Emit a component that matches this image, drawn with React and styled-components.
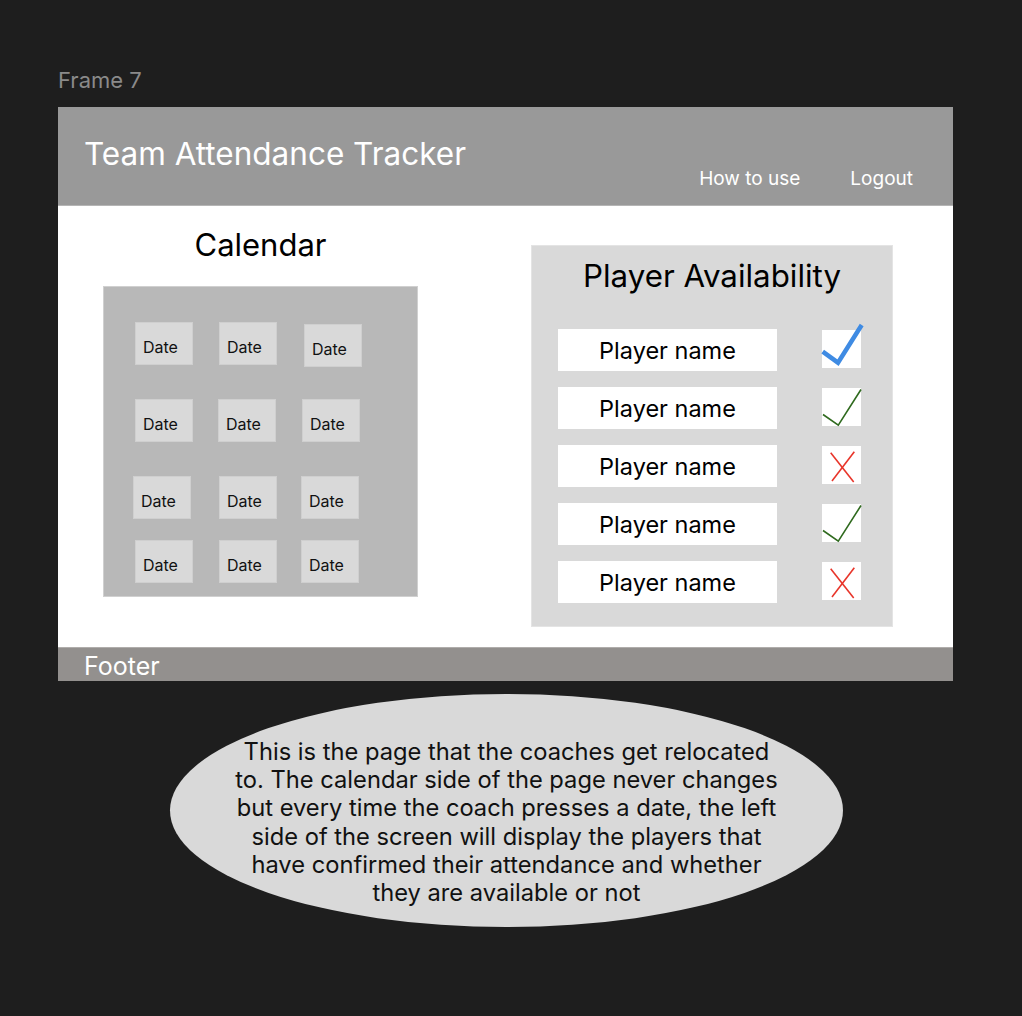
import React from "react";
import styled, { createGlobalStyle } from "styled-components";

const Global = createGlobalStyle`
  html, body { margin: 0; padding: 0; background: #1e1e1e; }
  body { font-family: Inter, "Noto Sans", "Liberation Sans", sans-serif; }
`;

const Page = styled.div`
  width: 1022px;
  height: 1016px;
  box-sizing: border-box;
  padding: 65px 0 0 58px;
  background: #1e1e1e;
`;

const FrameLabel = styled.div`
  color: #8a8a8a;
  font-size: 22px;
  line-height: 30px;
  height: 42px;
`;

const Frame = styled.div`
  width: 895px;
  display: flex;
  flex-direction: column;
  background: #ffffff;
`;

const Header = styled.header`
  height: 99px;
  background: #999999;
  display: flex;
  justify-content: space-between;
  align-items: flex-start;
  padding: 0 40px 0 26px;
  box-sizing: border-box;
  border-bottom: 1px solid #b5b5b5;
`;

const Title = styled.h1`
  margin: 28px 0 0;
  font-weight: 400;
  font-size: 31.5px;
  line-height: 38px;
  color: #ffffff;
`;

const Nav = styled.nav`
  display: flex;
  gap: 50px;
  margin-top: 59px;
`;

const NavLink = styled.span`
  color: #ffffff;
  font-size: 19px;
  line-height: 25px;
`;

const Body = styled.main`
  height: 441px;
  display: flex;
  align-items: flex-start;
  padding-left: 45px;
  gap: 113px;
`;

const CalendarCol = styled.section`
  width: 315px;
  display: flex;
  flex-direction: column;
  align-items: center;
  padding-top: 21px;
  gap: 23px;
`;

const SectionTitle = styled.h2`
  margin: 0;
  font-weight: 400;
  font-size: 31px;
  line-height: 36px;
  color: #000000;
`;

const CalendarBox = styled.div`
  width: 315px;
  height: 311px;
  box-sizing: border-box;
  background: #b8b8b8;
  border: 1px solid #d0d0d0;
  display: grid;
  grid-template-columns: 84px 83px 58px;
  grid-template-rows: 77px 77px 64px 43px;
  padding: 35px 0 0 31px;
`;

const DateCell = styled.div`
  width: 58px;
  height: 43px;
  box-sizing: border-box;
  background: #d9d9d9;
  border: 1px solid #cfcfcf;
  display: flex;
  align-items: center;
  padding: 6px 0 0 7px;
  font-size: 16px;
  color: #111111;
  margin-left: ${(p) => p.$dx || 0}px;
  margin-top: ${(p) => p.$dy || 0}px;
`;

const Panel = styled.section`
  margin-top: 39px;
  width: 362px;
  height: 382px;
  box-sizing: border-box;
  background: #d9d9d9;
  border: 1px solid #e4e4e4;
  padding: 11px 0 0 26px;
  display: flex;
  flex-direction: column;
`;

const PanelTitle = styled.h2`
  margin: 0 0 34px -26px;
  text-align: center;
  font-weight: 400;
  font-size: 31.3px;
  line-height: 38px;
  color: #000000;
`;

const Rows = styled.div`
  display: flex;
  flex-direction: column;
  gap: 16px;
`;

const Row = styled.div`
  display: flex;
  align-items: flex-start;
  gap: 45px;
`;

const NameBox = styled.div`
  width: 219px;
  height: 42px;
  background: #ffffff;
  display: flex;
  align-items: center;
  justify-content: center;
  font-size: 23.5px;
  color: #000000;
`;

const MarkBox = styled.div`
  width: 39px;
  height: 38px;
  margin-top: ${(p) => p.$dy || 0}px;
  background: #ffffff;
  position: relative;
`;

const MarkSvg = styled.svg`
  position: absolute;
  left: 0;
  top: 0;
  overflow: visible;
`;

const Footer = styled.footer`
  height: 34px;
  background: #93908e;
  border-top: 1px solid #b0adab;
  box-sizing: border-box;
  padding: 2px 0 0 26px;
  display: flex;
  align-items: center;
`;

const FooterText = styled.span`
  color: #ffffff;
  font-size: 25px;
  line-height: 30px;
`;

const NoteWrap = styled.div`
  margin: 13px 0 0 112px;
  width: 673px;
  height: 233px;
  border-radius: 50%;
  background: #d9d9d9;
  display: flex;
  align-items: center;
  justify-content: center;
  padding-top: 24px;
  box-sizing: border-box;
`;

const NoteText = styled.p`
  margin: 0;
  text-align: center;
  font-size: 23.7px;
  line-height: 28.2px;
  color: #111111;
`;

function Mark({ type }) {
  if (type === "blue") {
    return (
      <MarkSvg width="39" height="38" viewBox="0 0 39 38">
        <polyline points="0.7,21.7 16,32.7 39.7,-5" fill="none" stroke="#3f8be3" strokeWidth="4.5" />
      </MarkSvg>
    );
  }
  if (type === "green") {
    return (
      <MarkSvg width="39" height="38" viewBox="0 0 39 38">
        <polyline points="1,26.5 16.3,37.2 39,1.5" fill="none" stroke="#2f6a1e" strokeWidth="1.6" />
      </MarkSvg>
    );
  }
  return (
    <MarkSvg width="39" height="38" viewBox="0 0 39 38">
      <line x1="8.7" y1="6.7" x2="31.7" y2="36" stroke="#e8352a" strokeWidth="1.6" />
      <line x1="32.3" y1="5.7" x2="10" y2="35" stroke="#e8352a" strokeWidth="1.6" />
    </MarkSvg>
  );
}

const dates = [
  { dx: 0, dy: 0 }, { dx: 0, dy: 0 }, { dx: 2, dy: 2 },
  { dx: 0, dy: 0 }, { dx: -1, dy: 0 }, { dx: 0, dy: 0 },
  { dx: -2, dy: 0 }, { dx: 0, dy: 0 }, { dx: -1, dy: 0 },
  { dx: 0, dy: 0 }, { dx: 0, dy: 0 }, { dx: -1, dy: 0 },
];

const players = [
  { mark: "blue", dy: 1 },
  { mark: "green", dy: 1 },
  { mark: "red", dy: 1 },
  { mark: "green", dy: 1 },
  { mark: "red", dy: 1 },
];

export default function App() {
  return (
    <>
      <Global />
      <Page>
        <FrameLabel>Frame 7</FrameLabel>
        <Frame>
          <Header>
            <Title>Team Attendance Tracker</Title>
            <Nav>
              <NavLink>How to use</NavLink>
              <NavLink>Logout</NavLink>
            </Nav>
          </Header>
          <Body>
            <CalendarCol>
              <SectionTitle>Calendar</SectionTitle>
              <CalendarBox>
                {dates.map((d, i) => (
                  <DateCell key={i} $dx={d.dx} $dy={d.dy}>Date</DateCell>
                ))}
              </CalendarBox>
            </CalendarCol>
            <Panel>
              <PanelTitle>Player Availability</PanelTitle>
              <Rows>
                {players.map((p, i) => (
                  <Row key={i}>
                    <NameBox>Player name</NameBox>
                    <MarkBox $dy={p.dy}>
                      <Mark type={p.mark} />
                    </MarkBox>
                  </Row>
                ))}
              </Rows>
            </Panel>
          </Body>
          <Footer>
            <FooterText>Footer</FooterText>
          </Footer>
        </Frame>
        <NoteWrap>
          <NoteText>
            This is the page that the coaches get relocated
            <br />
            to. The calendar side of the page never changes
            <br />
            but every time the coach presses a date, the left
            <br />
            side of the screen will display the players that
            <br />
            have confirmed their attendance and whether
            <br />
            they are available or not
          </NoteText>
        </NoteWrap>
      </Page>
    </>
  );
}
